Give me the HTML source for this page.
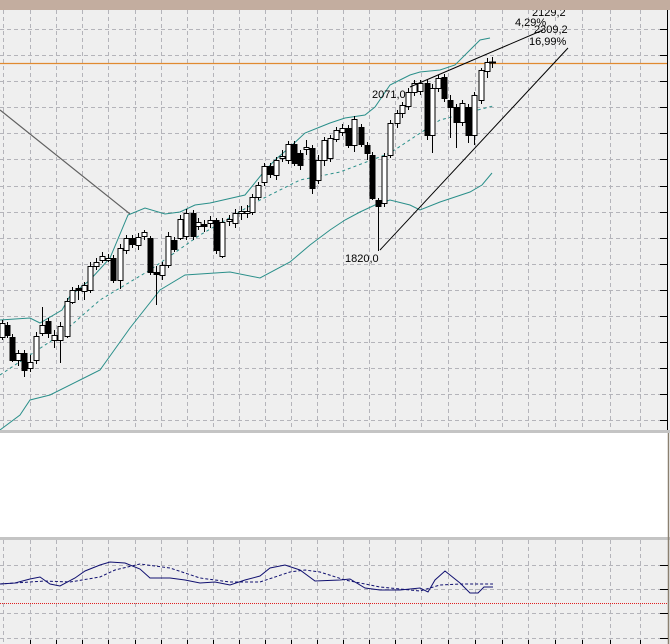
<!DOCTYPE html>
<html><head><meta charset="utf-8"><style>
html,body{margin:0;padding:0;background:#efefef;}
svg{display:block;}
text{font-family:"Liberation Sans",sans-serif;font-size:11px;fill:#000;}
</style></head><body>
<svg width="670" height="644" viewBox="0 0 670 644" xmlns="http://www.w3.org/2000/svg">
<rect width="670" height="644" fill="#efefef"/>
<g stroke="#b4b4ba" stroke-width="1" stroke-dasharray="4,3" fill="none">
<path d="M3.5 10V431M30.5 10V431M56.5 10V431M82.5 10V431M108.5 10V431M135.5 10V431M161.5 10V431M187.5 10V431M213.5 10V431M239.5 10V431M265.5 10V431M291.5 10V431M317.5 10V431M343.5 10V431M369.5 10V431M395.5 10V431M421.5 10V431M448.5 10V431M475.5 10V431M502.5 10V431M528.5 10V431M555.5 10V431M582.5 10V431M610.5 10V431M640.5 10V431"/>
<path d="M3.5 540V644M30.5 540V644M56.5 540V644M82.5 540V644M108.5 540V644M135.5 540V644M161.5 540V644M187.5 540V644M213.5 540V644M239.5 540V644M265.5 540V644M291.5 540V644M317.5 540V644M343.5 540V644M369.5 540V644M395.5 540V644M421.5 540V644M448.5 540V644M475.5 540V644M502.5 540V644M528.5 540V644M555.5 540V644M582.5 540V644M610.5 540V644M640.5 540V644"/>
<path d="M0 29.5H668M0 55.5H668M0 81.5H668M0 107.5H668M0 133.5H668M0 159.5H668M0 186.5H668M0 212.5H668M0 238.5H668M0 264.5H668M0 290.5H668M0 316.5H668M0 342.5H668M0 368.5H668M0 394.5H668M0 420.5H668"/>
<path d="M0 565.5H668M0 589.5H668M0 613.5H668M0 638.5H668"/>
</g>
<line x1="0" y1="63.5" x2="668" y2="63.5" stroke="#e08a30" stroke-width="1.3"/>
<line x1="667.5" y1="10" x2="667.5" y2="431" stroke="#000"/>
<path stroke="#000" d="M660 29.5H668M660 55.5H668M660 81.5H668M660 107.5H668M660 133.5H668M660 159.5H668M660 186.5H668M660 212.5H668M660 238.5H668M660 264.5H668M660 290.5H668M660 316.5H668M660 342.5H668M660 368.5H668M660 394.5H668M660 420.5H668"/>
<line x1="0" y1="110" x2="130" y2="214" stroke="#606060" stroke-width="1.2"/>
<g fill="none" stroke="#2a8f8a" stroke-width="1">
<polyline points="0,320 30,318 40,323 62,310 70,296 90,280 110,258 128,215 145,208 165,214 180,212 195,205 210,203 245,195 262,174 275,160 290,147 305,133 320,127 330,123 345,118 365,115 375,107 390,85 400,80 410,75 420,72 440,70 455,65 470,50 480,40 490,38"/>
<polyline points="0,430 20,415 30,400 50,395 80,380 100,370 130,328 160,290 185,275 230,272 260,278 290,262 310,245 330,230 345,220 360,212 375,205 390,200 410,205 420,210 440,202 470,192 482,185 492,173"/>
<polyline stroke-dasharray="3,3" points="0,375 30,355 60,335 100,300 150,270 200,235 260,200 300,180 340,172 390,153 440,120 493,106"/>
</g>
<g stroke="#000" stroke-width="1">
<path d="M2.5 320V340M7.5 322V338M12.5 334V362M18.5 350V366M24.5 350V377M30.5 355V372M36.5 332V364M42.5 307V336M48.5 318V338M54.5 330V348M60.5 322V363M67.5 298V338M72.5 287V304M78.5 285V300M84.5 282V300M90.5 262V293M96.5 258V270M102.5 252V263M108.5 254V262M113.5 255V283M120.5 244V289M126.5 235V254M132.5 235V248M138.5 233V250M144.5 230V240M150.5 236V275M156.5 266V305M162.5 262V280M168.5 232V268M174.5 237V252M180.5 215V240M186.5 209V240M193.5 210V240M198.5 218V230M204.5 220V232M210.5 216V228M216.5 218V254M222.5 218V258M229.5 215V226M235.5 209V228M241.5 206V220M247.5 205V218M252.5 194V215M258.5 182V200M264.5 163V186M270.5 163V178M276.5 157V180M282.5 150V162M288.5 141V164M294.5 141V166M300.5 150V170M306.5 140V155M312.5 145V194M318.5 155V184M324.5 137V166M330.5 135V162M336.5 127V142M342.5 124V136M348.5 125V148M354.5 116V152M361.5 124V147M367.5 142V160M372.5 152V200M378.5 198V251M384.5 153V207M390.5 120V158M397.5 110V128M402.5 102V118M408.5 88V110M414.5 80V96M420.5 80V95M427.5 80V140M432.5 84V153M438.5 75V92M444.5 74V102M450.5 95V138M456.5 104V148M462.5 100V126M468.5 104V143M474.5 92V145M481.5 68V104M487.5 58V78M492.5 57V68"/>
<g fill="#fff">
<rect x="0" y="323.5" width="5" height="14"/><rect x="16" y="353.5" width="5" height="7"/><rect x="28" y="362.5" width="5" height="6"/><rect x="34" y="336.5" width="5" height="24"/><rect x="40" y="325.5" width="5" height="8"/><rect x="52" y="335.5" width="5" height="5"/><rect x="58" y="326.5" width="5" height="14"/><rect x="65" y="301.5" width="5" height="35"/><rect x="70" y="290.5" width="5" height="12"/><rect x="82" y="285.5" width="5" height="6"/><rect x="88" y="266.5" width="5" height="24"/><rect x="94" y="262.5" width="5" height="4"/><rect x="100" y="256.5" width="5" height="4"/><rect x="106" y="258.5" width="5" height="2"/><rect x="118" y="248.5" width="5" height="32"/><rect x="124" y="238.5" width="5" height="12"/><rect x="136" y="237.5" width="5" height="8"/><rect x="142" y="232.5" width="5" height="4"/><rect x="160" y="265.5" width="5" height="10"/><rect x="166" y="236.5" width="5" height="29"/><rect x="178" y="219.5" width="5" height="19"/><rect x="184" y="213.5" width="5" height="23"/><rect x="196" y="222.5" width="5" height="4"/><rect x="208" y="220.5" width="5" height="3"/><rect x="220" y="222.5" width="5" height="34"/><rect x="227" y="219.5" width="5" height="2"/><rect x="233" y="213.5" width="5" height="10"/><rect x="239" y="211.5" width="5" height="2"/><rect x="245" y="211.5" width="5" height="2"/><rect x="250" y="197.5" width="5" height="15"/><rect x="256" y="185.5" width="5" height="12"/><rect x="262" y="166.5" width="5" height="16"/><rect x="274" y="160.5" width="5" height="15"/><rect x="280" y="156.5" width="5" height="2"/><rect x="286" y="144.5" width="5" height="16"/><rect x="304" y="147.5" width="5" height="2"/><rect x="316" y="160.5" width="5" height="20"/><rect x="322" y="140.5" width="5" height="20"/><rect x="328" y="138.5" width="5" height="20"/><rect x="334" y="130.5" width="5" height="9"/><rect x="340" y="128.5" width="5" height="4"/><rect x="352" y="119.5" width="5" height="26"/><rect x="382" y="156.5" width="5" height="47"/><rect x="388" y="123.5" width="5" height="32"/><rect x="395" y="113.5" width="5" height="10"/><rect x="400" y="105.5" width="5" height="8"/><rect x="406" y="92.5" width="5" height="14"/><rect x="412" y="83.5" width="5" height="9"/><rect x="418" y="83.5" width="5" height="8"/><rect x="430" y="88.5" width="5" height="47"/><rect x="436" y="78.5" width="5" height="10"/><rect x="460" y="103.5" width="5" height="19"/><rect x="472" y="95.5" width="5" height="40"/><rect x="479" y="70.5" width="5" height="30"/><rect x="485" y="62.5" width="5" height="9"/>
</g>
<g fill="#000">
<rect x="5" y="325.5" width="5" height="10"/><rect x="10" y="337.5" width="5" height="23"/><rect x="22" y="353.5" width="5" height="17"/><rect x="46" y="321.5" width="5" height="12"/><rect x="76" y="288.5" width="5" height="2"/><rect x="111" y="258.5" width="5" height="22"/><rect x="130" y="238.5" width="5" height="6"/><rect x="148" y="238.5" width="5" height="34"/><rect x="154" y="272.5" width="5" height="2"/><rect x="172" y="240.5" width="5" height="9"/><rect x="191" y="213.5" width="5" height="23"/><rect x="202" y="224.5" width="5" height="2"/><rect x="214" y="220.5" width="5" height="30"/><rect x="268" y="166.5" width="5" height="8"/><rect x="292" y="144.5" width="5" height="19"/><rect x="298" y="153.5" width="5" height="12"/><rect x="310" y="148.5" width="5" height="40"/><rect x="346" y="128.5" width="5" height="17"/><rect x="359" y="127.5" width="5" height="17"/><rect x="365" y="145.5" width="5" height="8"/><rect x="370" y="155.5" width="5" height="43"/><rect x="376" y="200.5" width="5" height="6"/><rect x="425" y="83.5" width="5" height="52"/><rect x="442" y="77.5" width="5" height="21"/><rect x="448" y="100.5" width="5" height="7"/><rect x="454" y="107.5" width="5" height="15"/><rect x="466" y="107.5" width="5" height="28"/>
</g>
<line x1="489" y1="62.5" x2="496" y2="62.5" stroke-width="2"/>
</g>
<line x1="380" y1="250" x2="568" y2="48" stroke="#000"/>
<line x1="410" y1="87" x2="543" y2="30" stroke="#000"/>
<text x="372" y="98">2071,0</text>
<text x="345" y="262">1820,0</text>
<text x="532" y="16">2129,2</text>
<text x="515" y="26">4,29%</text>
<text x="534" y="33">2309,2</text>
<text x="529" y="45">16,99%</text>
<rect x="0" y="0" width="670" height="10" fill="#c3ad9f"/>
<rect x="0" y="430" width="670" height="3" fill="#c4c4c4"/>
<rect x="0" y="433" width="670" height="104" fill="#fff"/>
<rect x="0" y="537" width="670" height="3" fill="#c4c4c4"/>
<line x1="668.5" y1="433" x2="668.5" y2="644" stroke="#8a8070" stroke-width="1.5"/>
<path stroke="#000" d="M660 565.5H668M660 589.5H668M660 613.5H668M660 638.5H668"/>
<path stroke="#000" d="M30.5 640V644M56.5 640V644M82.5 640V644M108.5 640V644M135.5 640V644M161.5 640V644M187.5 640V644M213.5 640V644M239.5 640V644M265.5 640V644M291.5 640V644M317.5 640V644M343.5 640V644M369.5 640V644M395.5 640V644M421.5 640V644M448.5 640V644M475.5 640V644M502.5 640V644M528.5 640V644M555.5 640V644M582.5 640V644M610.5 640V644M640.5 640V644"/>
<line x1="0" y1="603.5" x2="668" y2="603.5" stroke="#e02020" stroke-dasharray="1,1"/>
<g fill="none" stroke="#101070" stroke-width="1">
<polyline points="0,584 15,583 30,579 40,577 50,584 60,586 75,578 85,571 100,565 110,562 125,563 140,569 150,578 170,578 185,580 200,583 215,582 230,585 245,580 260,576 270,568 285,565 300,570 315,581 340,580 350,579 365,588 380,590 400,590 420,588 428,592 435,580 445,571 460,583 470,593 478,593 484,587 493,587"/>
<polyline stroke-dasharray="3,2" points="0,584 45,581 70,582 100,577 115,570 140,564 170,568 200,578 230,582 260,582 290,572 305,570 320,572 345,580 380,587 420,591 440,585 460,584 493,584"/>
</g>
</svg>
</body></html>
